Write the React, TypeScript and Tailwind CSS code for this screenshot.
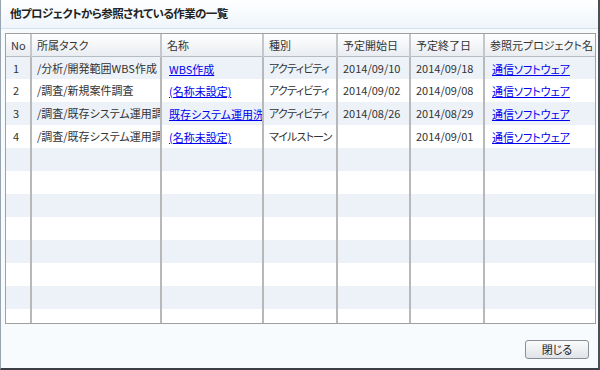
import React from "react";

const cols = [25, 130, 102, 74, 73, 74, 111];
const headers = ["No", "所属タスク", "名称", "種別", "予定開始日", "予定終了日", "参照元プロジェクト名"];

type Row = { no: string; task: string; name: string; kind: string; start: string; end: string; src: string };

const rows: Row[] = [
  { no: "1", task: "/分析/開発範囲WBS作成", name: "WBS作成", kind: "アクティビティ", start: "2014/09/10", end: "2014/09/18", src: "通信ソフトウェア" },
  { no: "2", task: "/調査/新規案件調査", name: "(名称未設定)", kind: "アクティビティ", start: "2014/09/02", end: "2014/09/08", src: "通信ソフトウェア" },
  { no: "3", task: "/調査/既存システム運用調査", name: "既存システム運用洗い出し", kind: "アクティビティ", start: "2014/08/26", end: "2014/08/29", src: "通信ソフトウェア" },
  { no: "4", task: "/調査/既存システム運用調査", name: "(名称未設定)", kind: "マイルストーン", start: "", end: "2014/09/01", src: "通信ソフトウェア" },
];

const font = "font-['Noto_Sans_CJK_JP','Noto_Sans',sans-serif] [font-feature-settings:'palt']";

export default function App() {
  const body: (Row | null)[] = [...rows];
  while (body.length < 12) body.push(null);
  return (
    <div className={`w-[600px] h-[370px] bg-[#f7fbfe] border-l border-l-[#98a4b0] border-r-2 border-r-[#4a4f55] border-b-2 border-b-[#3c4046] flex flex-col text-[11px] text-[#333] ${font}`}>
      <div className="h-[29px] shrink-0 bg-gradient-to-b from-[#ffffff] to-[#eef5fb] border-b border-[#d6e0ea] flex items-center pl-[9px]">
        <span className="font-bold text-[11.5px] tracking-[-0.6px] text-[#222]">他プロジェクトから参照されている作業の一覧</span>
      </div>
      <div className="ml-[4px] mt-[4px] w-[591px] h-[291px] border border-[#a0a0a0] bg-white overflow-hidden">
        <table className="table-fixed border-collapse w-[589px]">
          <colgroup>
            {cols.map((w, i) => (
              <col key={i} style={{ width: w }} />
            ))}
          </colgroup>
          <thead>
            <tr className="h-[22px] bg-gradient-to-b from-[#ffffff] to-[#e9edf1]">
              {headers.map((h, i) => (
                <th
                  key={i}
                  className={`font-normal text-left pl-[5px] whitespace-nowrap overflow-hidden border-b border-b-[#b4bcc4] ${i < 6 ? "border-r-2 border-r-[#c4c8cc]" : ""}`}
                >
                  {h}
                </th>
              ))}
            </tr>
          </thead>
          <tbody>
            {body.map((r, ri) => (
              <tr key={ri} className={`h-[23px] ${ri % 2 === 0 ? "bg-[#edf2f9]" : "bg-white"}`}>
                {[r?.no, r?.task, r?.name, r?.kind, r?.start, r?.end, r?.src].map((v, ci) => {
                  const link = ci === 2 || ci === 6;
                  return (
                    <td
                      key={ci}
                      className={`p-0 whitespace-nowrap overflow-hidden ${ci === 0 ? "pl-[7px]" : ci === 2 || ci === 6 ? "pl-[7px]" : "pl-[5px]"} ${ci === 3 ? "tracking-[-0.8px]" : ""} ${ci < 6 ? "border-r-2 border-r-[#b8b8b8]" : ""}`}
                    >
                      {v ? (
                        link ? (
                          <span className="text-[#0000ee] underline pt-[2px] inline-block">{v}</span>
                        ) : (
                          <span>{v}</span>
                        )
                      ) : null}
                    </td>
                  );
                })}
              </tr>
            ))}
          </tbody>
        </table>
      </div>
      <div className="flex justify-end pr-[9px] mt-[16px]">
        <button className="w-[64px] h-[19px] rounded-[3px] border border-[#8a8f96] bg-gradient-to-b from-[#fbfbfb] to-[#dfe3e8] text-[11px] leading-none text-[#222] flex items-center justify-center">
          閉じる
        </button>
      </div>
    </div>
  );
}
